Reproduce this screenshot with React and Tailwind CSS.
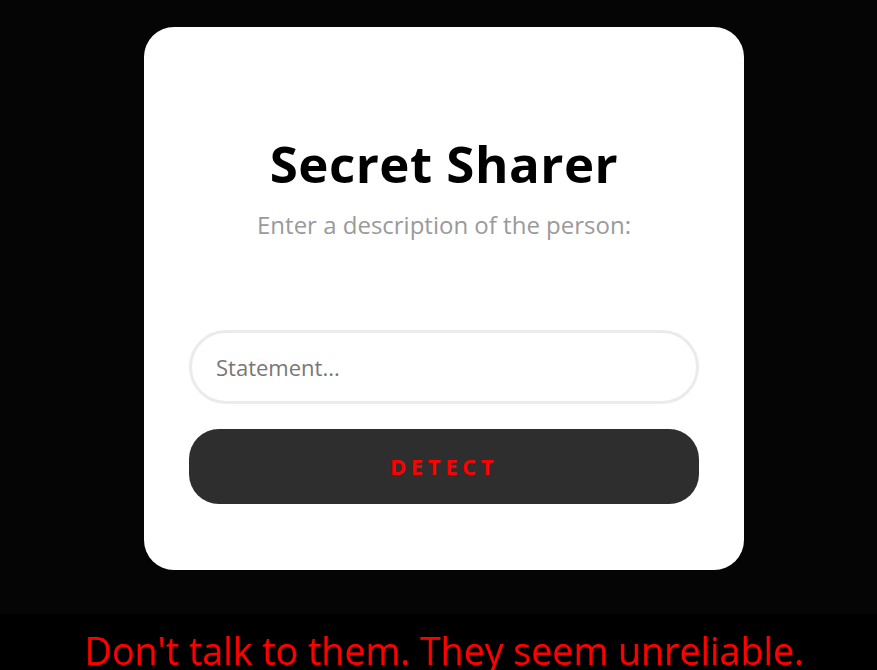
import React, { useState } from 'react';

const font = { fontFamily: '"Open Sans", "Noto Sans", sans-serif' };

const App = () => {
  const [statement, setStatement] = useState('');

  return (
    <div className="w-[877px] h-[670px] bg-black overflow-hidden" style={font}>
      {/* Card area */}
      <div className="h-[614px] bg-[#050505] pl-[11px] pt-[27px] flex justify-center">
        <div className="w-[600px] h-[543px] bg-white rounded-[30px] px-[45px] pt-[106px] flex flex-col">
          <h1 className="text-center text-[51px] leading-[60px] font-bold text-black tracking-[0.5px]">
            Secret Sharer
          </h1>
          <p className="text-center text-[24px] leading-[30px] mt-[17px] text-[#9a9a9a]">
            Enter a description of the person:
          </p>
          <input
            value={statement}
            onChange={e => setStatement(e.target.value)}
            placeholder="Statement..."
            className="mt-[90px] h-[74px] w-full rounded-[37px] border-[3px] border-[#ebebeb] px-[24px] text-[22px] text-black placeholder:text-[#777777] outline-none"
          />
          <button className="mt-[25px] h-[75px] w-full rounded-[30px] bg-[#2e2e2e] text-[#ff0000] text-[22px] font-bold tracking-[4.6px]">
            DETECT
          </button>
        </div>
      </div>

      {/* Result */}
      <div className="pl-[11px] pt-[14px] text-center text-[37.6px] leading-[46px] text-[#ff0000]">
        Don't talk to them. They seem unreliable.
      </div>
    </div>
  );
};

export default App;
